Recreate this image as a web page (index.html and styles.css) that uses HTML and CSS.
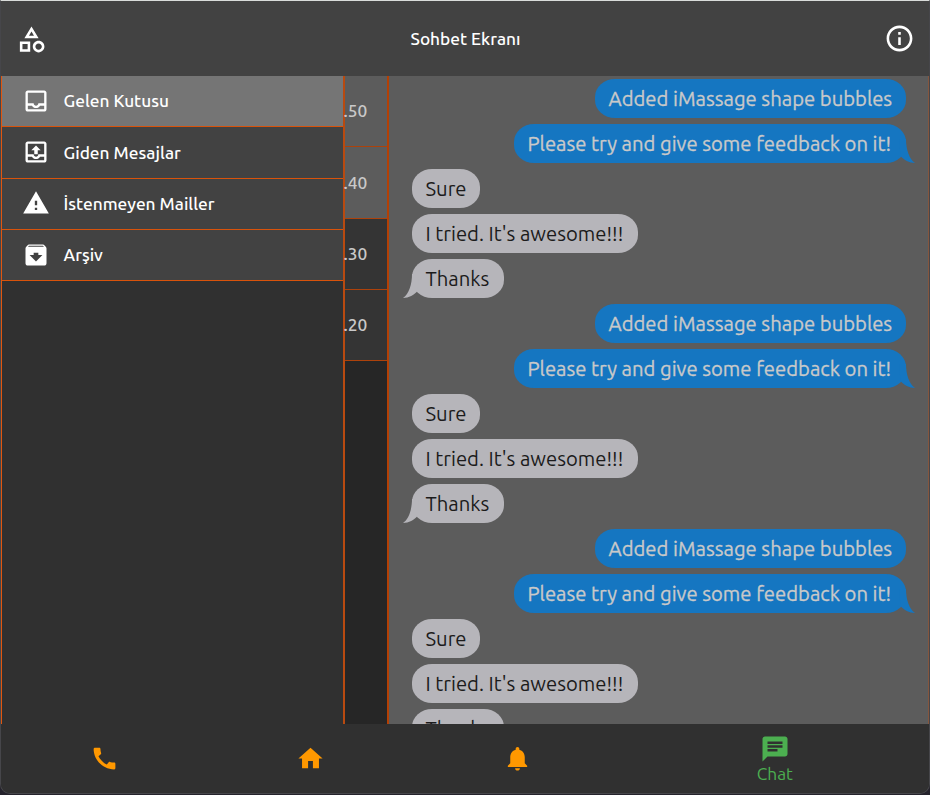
FILE: index.html
```html
<!DOCTYPE html>
<html lang="tr">
<head>
<meta charset="utf-8">
<title>Sohbet Ekranı</title>
<link rel="stylesheet" href="styles.css">
</head>
<body>
<div class="window">
  <header class="appbar">
    <svg class="icon lead" viewBox="0 0 24 24"><path d="M12 2l-5.500 9h11L12 2zm0 3.840L13.930 9h-3.870L12 5.840zM17.500 13c-2.490 0-4.500 2.010-4.500 4.500s2.010 4.500 4.500 4.500 4.500-2.010 4.500-4.500-2.010-4.500-4.500-4.500zm0 7c-1.380 0-2.500-1.120-2.500-2.500s1.120-2.500 2.500-2.500 2.500 1.120 2.500 2.500-1.120 2.500-2.500 2.500zM3 21.500h8v-8H3v8zm2-6h4v4H5v-4z"/></svg>
    <h1 class="title">Sohbet Ekranı</h1>
    <svg class="icon info" viewBox="0 0 24 24"><path d="M11 7h2v2h-2zm0 4h2v6h-2zm1-9C6.480 2 2 6.480 2 12s4.480 10 10 10 10-4.480 10-10S17.520 2 12 2zm0 18c-4.410 0-8-3.590-8-8s3.590-8 8-8 8 3.590 8 8-3.590 8-8 8z"/></svg>
  </header>
  <main class="content">
    <nav class="drawer">
      <a class="item selected"><svg class="icon" viewBox="0 0 24 24"><path d="M19 3H4.990C3.880 3 3 3.900 3 5v14c0 1.100.88 2 1.990 2H19c1.100 0 2-.9 2-2V5c0-1.100-.9-2-2-2zm0 16H5v-3h3.560c.69 1.190 1.970 2 3.450 2s2.750-.81 3.450-2H19v3zm0-5h-4.990c0 1.100-.9 2-2 2s-2-.9-2-2H5V5h14v9z"/></svg><span>Gelen Kutusu</span></a>
      <a class="item"><svg class="icon" viewBox="0 0 24 24"><path d="M19 3H5c-1.100 0-2 .9-2 2v14c0 1.100.9 2 2 2h14c1.100 0 2-.9 2-2V5c0-1.100-.9-2-2-2zm0 16H5v-3h3.560c.69 1.190 1.970 2 3.450 2s2.750-.81 3.450-2H19v3zm0-5h-4.990c0 1.100-.9 2-2 2s-2-.9-2-2H5V5h14v9zM8 10.500h2.500V14h3v-3.500H16l-4-4z"/></svg><span>Giden Mesajlar</span></a>
      <a class="item"><svg class="icon" viewBox="0 0 24 24"><path d="M1 21h22L12 2 1 21zm12-3h-2v-2h2v2zm0-4h-2v-4h2v4z"/></svg><span>İstenmeyen Mailler</span></a>
      <a class="item"><svg class="icon" viewBox="0 0 24 24"><path d="M20.540 5.230l-1.390-1.680C18.880 3.210 18.470 3 18 3H6c-.47 0-.88.21-1.160.55L3.460 5.230C3.170 5.570 3 6.020 3 6.500V19c0 1.100.9 2 2 2h14c1.100 0 2-.9 2-2V6.500c0-.48-.17-.93-.46-1.270zM12 17.500L6.500 12H10v-2h4v2h3.500L12 17.500zM5.120 5l.81-1h12l.94 1H5.120z"/></svg><span>Arşiv</span></a>
    </nav>
    <section class="times">
      <div class="time lit">.50</div>
      <div class="time lit">.40</div>
      <div class="time">.30</div>
      <div class="time">.20</div>
    </section>
    <section class="chat">
      <div class="bubble me b-added"><span>Added iMassage shape bubbles</span></div>
      <div class="bubble me b-please"><span>Please try and give some feedback on it!</span><svg class="tail" viewBox="0 0 16 24"><path d="M0 0H7C7 10 10 20 16 24C10 24 5 21 1.500 17Z"/></svg></div>
      <div class="bubble b-sure"><span>Sure</span></div>
      <div class="bubble b-tried"><span>I tried. It's awesome!!!</span></div>
      <div class="bubble b-thanks"><span>Thanks</span><svg class="tail" viewBox="0 0 16 24"><path d="M16 0H9C9 10 6 20 0 24C6 24 11 21 14.500 17Z"/></svg></div>
      <div class="bubble me b-added"><span>Added iMassage shape bubbles</span></div>
      <div class="bubble me b-please"><span>Please try and give some feedback on it!</span><svg class="tail" viewBox="0 0 16 24"><path d="M0 0H7C7 10 10 20 16 24C10 24 5 21 1.500 17Z"/></svg></div>
      <div class="bubble b-sure"><span>Sure</span></div>
      <div class="bubble b-tried"><span>I tried. It's awesome!!!</span></div>
      <div class="bubble b-thanks"><span>Thanks</span><svg class="tail" viewBox="0 0 16 24"><path d="M16 0H9C9 10 6 20 0 24C6 24 11 21 14.500 17Z"/></svg></div>
      <div class="bubble me b-added"><span>Added iMassage shape bubbles</span></div>
      <div class="bubble me b-please"><span>Please try and give some feedback on it!</span><svg class="tail" viewBox="0 0 16 24"><path d="M0 0H7C7 10 10 20 16 24C10 24 5 21 1.500 17Z"/></svg></div>
      <div class="bubble b-sure"><span>Sure</span></div>
      <div class="bubble b-tried"><span>I tried. It's awesome!!!</span></div>
      <div class="bubble b-thanks"><span>Thanks</span></div>
    </section>
  </main>
  <footer class="tabs">
    <a class="tab"><svg class="icon" viewBox="0 0 24 24"><path d="M20.010 15.380c-1.230 0-2.420-.2-3.530-.56-.35-.12-.74-.03-1.010.24l-1.570 1.970c-2.830-1.350-5.480-3.900-6.890-6.830l1.950-1.660c.27-.28.35-.67.24-1.020-.37-1.110-.56-2.300-.56-3.530 0-.54-.45-.99-.99-.99H4.190C3.650 3 3 3.240 3 3.990 3 13.280 10.730 21 20.010 21c.71 0 .99-.63.99-1.180v-3.450c0-.54-.45-.99-.99-.99z"/></svg></a>
    <a class="tab"><svg class="icon" viewBox="0 0 24 24"><path d="M10 20v-6h4v6h5v-8h3L12 3 2 12h3v8z"/></svg></a>
    <a class="tab"><svg class="icon" viewBox="0 0 24 24"><path d="M12 22c1.100 0 2-.9 2-2h-4c0 1.100.89 2 2 2zm6-6v-5c0-3.070-1.640-5.640-4.500-6.320V4c0-.83-.67-1.500-1.500-1.500s-1.500.67-1.500 1.500v.68C7.630 5.360 6 7.920 6 11v5l-2 2v1h16v-1l-2-2z"/></svg></a>
    <a class="tab active"><svg class="icon" viewBox="0 0 24 24"><path d="M20 2H4c-1.100 0-1.990.9-1.990 2L2 22l4-4h14c1.100 0 2-.9 2-2V4c0-1.100-.9-2-2-2zM6 9h12v2H6V9zm8 5H6v-2h8v2zm4-6H6V6h12v2z"/></svg><span>Chat</span></a>
  </footer>
</div>
</body>
</html>
```
FILE: styles.css
```css
* { box-sizing: border-box; }
body {
  margin: 0;
  width: 930px;
  height: 795px;
  overflow: hidden;
  background: #25232c;
  font-family: Ubuntu, "Noto Sans", sans-serif;
}
.window {
  width: 930px;
  height: 794px;
  display: flex;
  flex-direction: column;
  overflow: hidden;
  background: #303030;
  border: 1px solid #46464a;
  border-top-color: #d9dcda;
  border-radius: 0 0 10px 10px;
}
.icon { display: block; fill: currentColor; flex: none; }

.appbar {
  flex: none;
  height: 75px;
  display: flex;
  align-items: center;
  justify-content: space-between;
  padding: 0 13.500px 0 14.500px;
  background: #424242;
  color: #fff;
}
.appbar .icon { width: 31px; height: 31px; margin-top: 1px; }
.appbar .info { margin-top: 0.500px; }
.title { margin: 0; font-size: 17.300px; font-weight: 500; line-height: 24px; white-space: nowrap; }

.content { flex: none; height: 648px; display: flex; overflow: hidden; }

.drawer {
  flex: none;
  width: 344px;
  border-left: 1px solid #e0560f;
  border-right: 2px solid #b84a10;
  background: #303030;
}
.item {
  height: 51.330px;
  display: flex;
  align-items: center;
  gap: 13.500px;
  padding: 0 0 0.750px 20px;
  background: #424242;
  border-bottom: 1px solid #d9530b;
  color: #fff;
  font-size: 17.300px;
  line-height: 21px;
  font-weight: 500;
  white-space: nowrap;
}
.item.selected { background: #757575; }
.item .icon { width: 28px; height: 28px; }

.times { flex: none; width: 44px; background: #262626; border-right: 2px solid #b34005; }
.time {
  height: 71.330px;
  display: flex;
  align-items: center;
  padding-bottom: 0.750px;
  background: #343434;
  border-bottom: 1px solid #ad420b;
  color: #c9c9c9;
  font-size: 17.300px;
  line-height: 21px;
  font-weight: 500;
  text-indent: -1.500px;
}
.time.lit { background: #5c5c5c; }

.chat {
  flex: 1;
  display: flex;
  flex-direction: column;
  align-items: flex-start;
  gap: 6px;
  padding: 3px 22px 0 23px;
  background: #5c5c5c;
  border-right: 1px solid #85563e;
  overflow: hidden;
}
.bubble {
  position: relative;
  flex: none;
  height: 39px;
  display: flex;
  align-items: center;
  padding-left: 13.500px;
  border-radius: 20px / 18px;
  background: #b6b5ba;
  color: #1b1b1b;
  font-size: 20.250px;
  line-height: 26px;
  white-space: nowrap;
}
.bubble.me { align-self: flex-end; background: #1576c1; color: #c9c9c9; -webkit-text-stroke: 0.300px #c9c9c9; }
.tail { position: absolute; bottom: 0; left: -9px; width: 16px; height: 24px; fill: #b6b5ba; }
.me .tail { left: auto; right: -9px; fill: #1576c1; }
.b-added { width: 311px; }
.b-please { width: 392px; }
.b-sure { width: 68px; }
.b-tried { width: 226px; }
.b-thanks { width: 92px; }

.tabs { flex: none; height: 69px; display: flex; background: #303030; }
.tab {
  flex: 0 0 206.500px;
  display: flex;
  flex-direction: column;
  align-items: center;
  justify-content: center;
  color: #ff9800;
}
.tab .icon { width: 29px; height: 29px; }
.tab.active { flex: 1; color: #4caf50; font-size: 17.300px; line-height: 20px; padding-top: 1px; }
.tab.active .icon { width: 30px; height: 30px; }
```
